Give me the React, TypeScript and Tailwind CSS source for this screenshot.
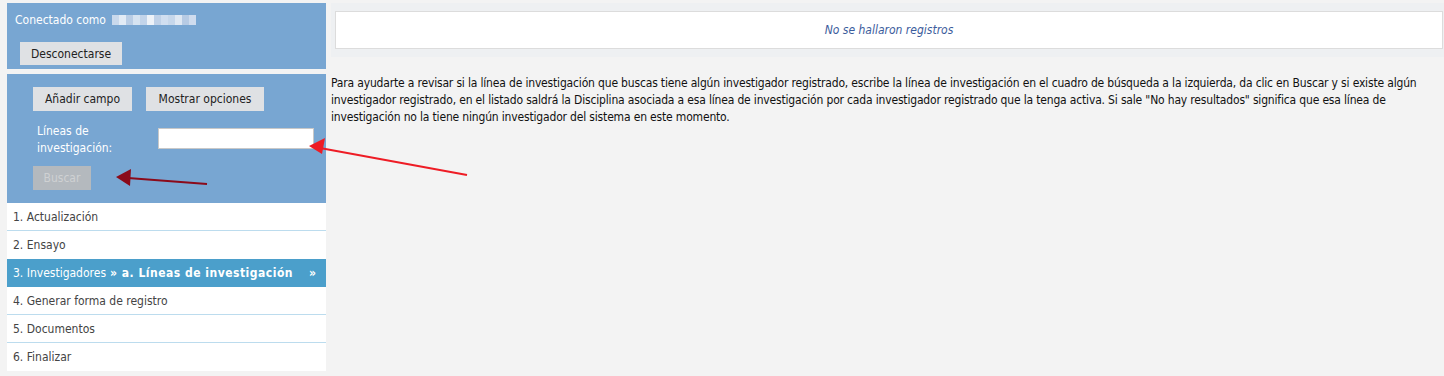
import React from "react"

const navItems = [
  { label: "1. Actualización" },
  { label: "2. Ensayo" },
  { label: "3. Investigadores", sub: "» a. Líneas de investigación", active: true },
  { label: "4. Generar forma de registro" },
  { label: "5. Documentos" },
  { label: "6. Finalizar" },
]

const blur = ["#c9d9ec", "#e2ebf5", "#b9cde5", "#d6e3f1", "#c2d4ea", "#edf2f8", "#bfd1e8", "#d0def0", "#c6d7eb", "#dfe8f3", "#b7cbe4", "#cfdcee"]

export default function App() {
  return (
    <div
      className="relative w-[1444px] h-[376px] overflow-hidden bg-[#f3f3f3] text-[12px] text-[#222]"
      style={{ fontFamily: '"DejaVu Sans Condensed", "DejaVu Sans", sans-serif' }}
    >
      <div className="flex pl-[7px] pt-[3px]">
        {/* Left column */}
        <div className="w-[319px] shrink-0 flex flex-col">
          <div className="bg-[#78a6d2] h-[66px] px-[8px] pt-[8px]">
            <div className="flex items-center text-white">
              <span>Conectado como</span>
              <span className="ml-[6px] flex h-[10px]">
                {blur.map((c, i) => (
                  <span key={i} className="w-[7px] h-[10px]" style={{ background: c }} />
                ))}
              </span>
            </div>
            <button className="mt-[13px] ml-[5px] h-[23px] px-[11px] bg-[#dfe1e4] text-[#222] leading-none">
              Desconectarse
            </button>
          </div>

          <div className="bg-[#78a6d2] h-[129px] mt-[5px] pl-[26px] pt-[13px]">
            <div className="flex gap-[14px]">
              <button className="h-[24px] w-[99px] bg-[#dfe1e4] text-[#222] leading-none">Añadir campo</button>
              <button className="h-[24px] w-[118px] bg-[#dfe1e4] text-[#222] leading-none">Mostrar opciones</button>
            </div>
            <div className="flex mt-[12px] pl-[4px]">
              <label className="w-[121px] text-white leading-[17px]">
                Líneas de
                <br />
                investigación:
              </label>
              <input className="mt-[5px] w-[156px] h-[21px] bg-white border border-[#c8c8c8] outline-none" />
            </div>
            <button
              disabled
              className="mt-[9px] h-[24px] w-[58px] bg-[#b4b9be] text-[#cfd1d3] leading-none"
            >
              Buscar
            </button>
          </div>

          <div className="bg-white">
            {navItems.map((n, i) => (
              <div
                key={i}
                className={`h-[28px] flex items-center pl-[6px] pr-[10px] ${
                  i < navItems.length - 1 && !n.active && !navItems[i + 1]?.active ? "border-b border-[#bcdcee]" : ""
                } ${n.active ? "bg-[#4b9fcb] text-white" : "text-[#444]"}`}
              >
                <span>{n.label}</span>
                {n.sub && <span className="ml-[4px] font-bold tracking-[0.5px]">{n.sub}</span>}
                {n.active && <span className="ml-auto font-bold">»</span>}
              </div>
            ))}
          </div>
        </div>

        {/* Right column */}
        <div className="flex-1 ml-[5px]">
          <div className="bg-[#eef0f2] h-[54px] pl-[4px] pr-[1px] pt-[8px]">
            <div className="h-[38px] bg-white border border-[#dcdcdc] flex items-center justify-center">
              <span className="italic text-[#3b5c9c]">No se hallaron registros</span>
            </div>
          </div>
          <p className="mt-[18px] pr-[2px] leading-[17px] tracking-[-0.17px] text-[#111]">
            Para ayudarte a revisar si la línea de investigación que buscas tiene algún investigador registrado,
            escribe la línea de investigación en el cuadro de búsqueda a la izquierda, da clic en Buscar y si existe
            algún investigador registrado, en el listado saldrá la Disciplina asociada a esa línea de investigación
            por cada investigador registrado que la tenga activa. Si sale "No hay resultados" significa que esa
            línea de investigación no la tiene ningún investigador del sistema en este momento.
          </p>
        </div>
      </div>

      {/* annotation arrows */}
      <svg className="absolute inset-0 pointer-events-none" width="1444" height="376">
        <line x1="467" y1="175" x2="320" y2="148" stroke="#ee1c25" strokeWidth="2" />
        <polygon points="309,146 325,138 322,154" fill="#ee1c25" />
        <line x1="207" y1="184" x2="128" y2="178" stroke="#8b0a1a" strokeWidth="2" />
        <polygon points="116,177 131,169 130,186" fill="#8b0a1a" />
      </svg>
    </div>
  )
}
